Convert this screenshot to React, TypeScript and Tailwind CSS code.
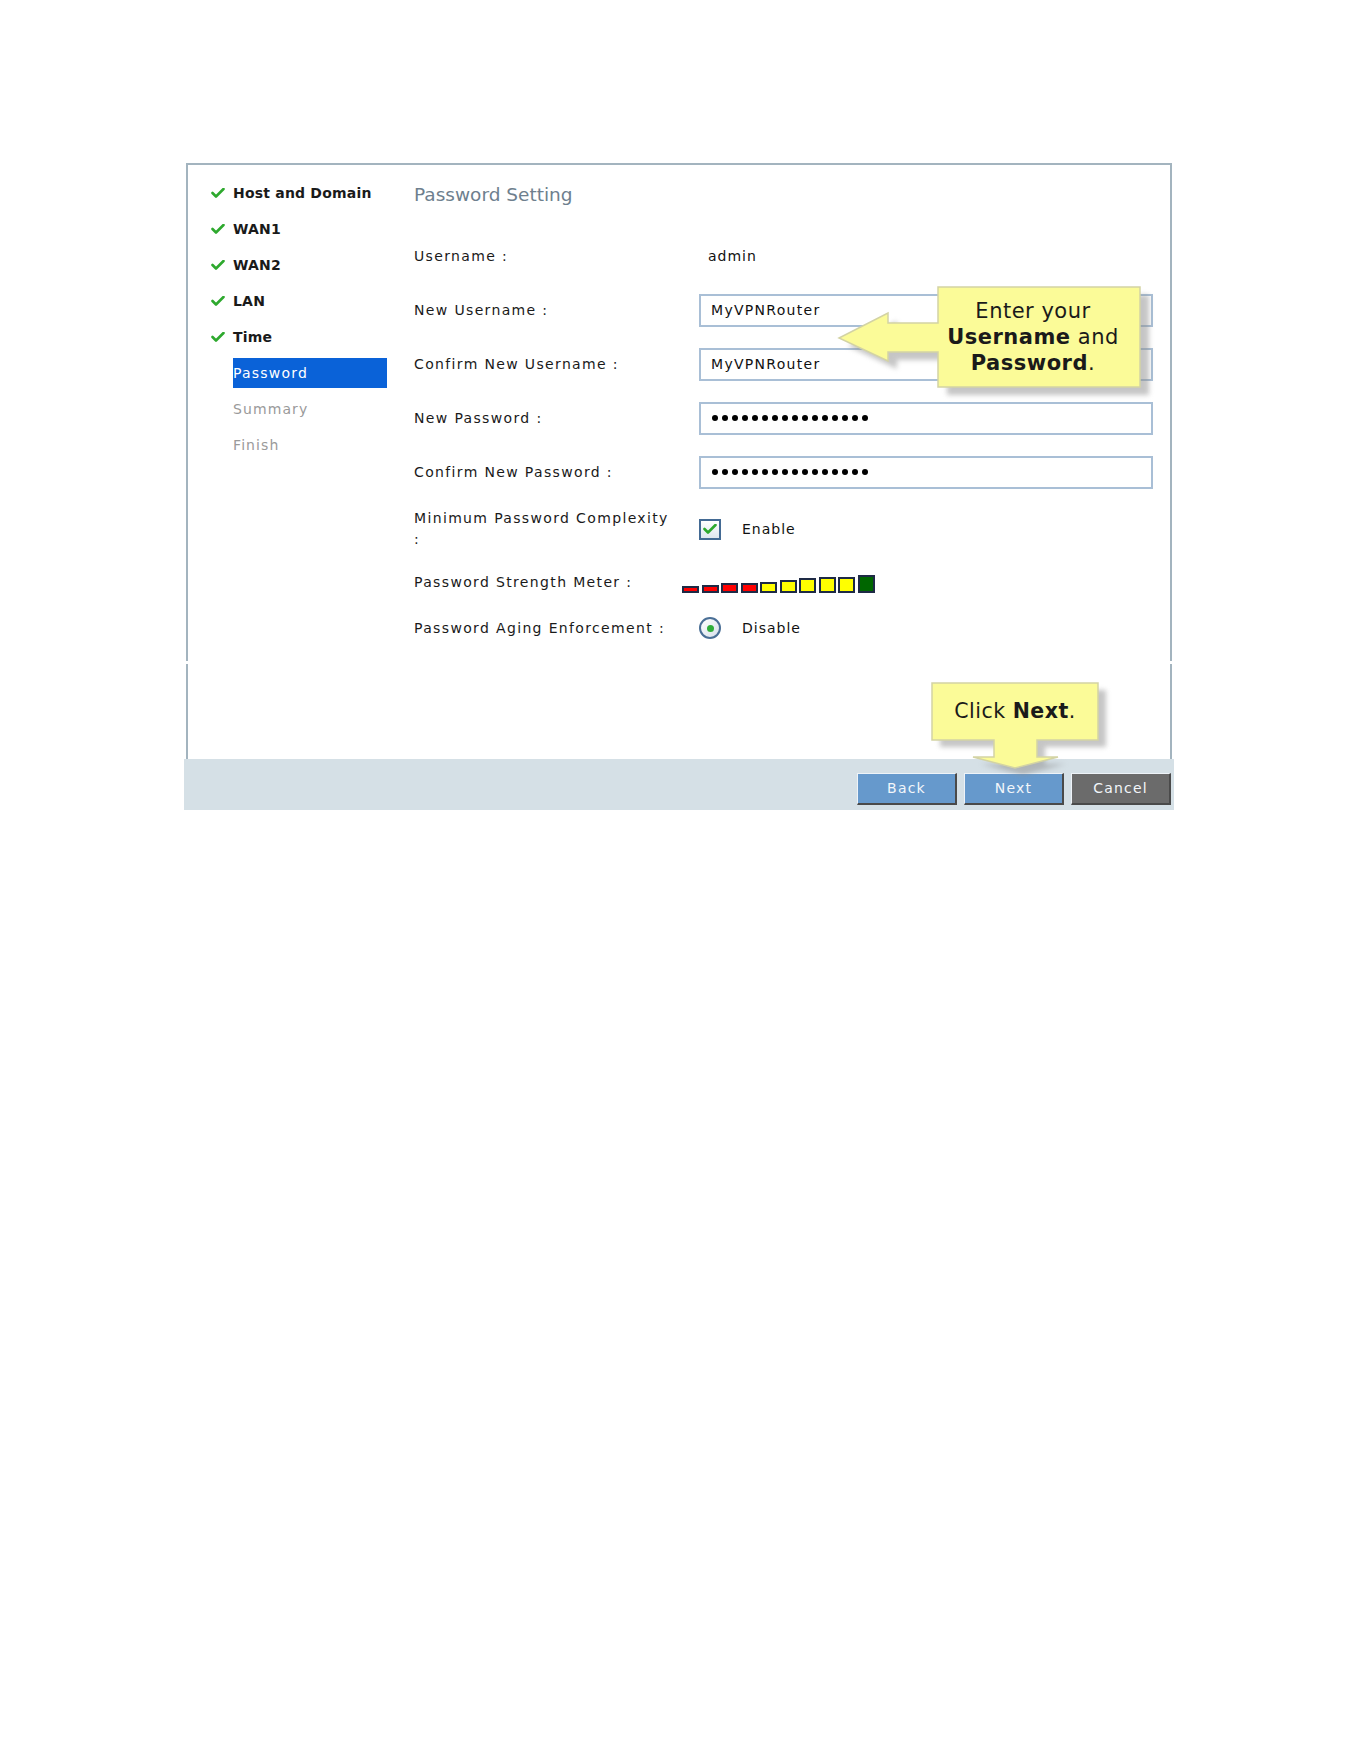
const font = { fontFamily: '"DejaVu Sans", Verdana, sans-serif' };

function Tick({ className = "" }: { className?: string }) {
  return (
    <svg width="14" height="10" viewBox="0 0 14 10" className={className}>
      <path d="M1.5 5 L5 8.5 L12.5 1" fill="none" stroke="#2ea92e" strokeWidth="2.6" strokeLinecap="round" strokeLinejoin="round" />
    </svg>
  );
}

const steps = [
  { name: "Host and Domain", state: "done" },
  { name: "WAN1", state: "done" },
  { name: "WAN2", state: "done" },
  { name: "LAN", state: "done" },
  { name: "Time", state: "done" },
  { name: "Password", state: "current" },
  { name: "Summary", state: "todo" },
  { name: "Finish", state: "todo" },
];

const meter = [
  { h: 7, c: "bg-[#ff0000]" },
  { h: 8, c: "bg-[#ff0000]" },
  { h: 10, c: "bg-[#ff0000]" },
  { h: 10, c: "bg-[#ff0000]" },
  { h: 11, c: "bg-[#ffff00]" },
  { h: 13, c: "bg-[#ffff00]" },
  { h: 15, c: "bg-[#ffff00]" },
  { h: 16, c: "bg-[#ffff00]" },
  { h: 16, c: "bg-[#ffff00]" },
  { h: 18, c: "bg-[#006600]" },
];

function TextBox({ value }: { value: string }) {
  return (
    <div className="w-[454px] h-[33px] border-2 border-[#a9bfd6] bg-white flex items-center pl-[10px] text-[14px] tracking-[1.3px] text-[#111]">
      {value}
    </div>
  );
}

function PasswordBox() {
  return (
    <div className="w-[454px] h-[33px] border-2 border-[#a9bfd6] bg-white flex items-center pl-[11px] gap-[4px]">
      {Array.from({ length: 16 }).map((_, i) => (
        <span key={i} className="w-[6px] h-[6px] rounded-full bg-black" />
      ))}
    </div>
  );
}

function Row({ label, children, h = "h-[54px]" }: { label: React.ReactNode; children?: React.ReactNode; h?: string }) {
  return (
    <div className={`flex items-center ${h}`}>
      <div className="w-[285px] text-[14px] leading-[21px] tracking-[1.35px] text-[#1a1a1a]">{label}</div>
      <div className="flex items-center">{children}</div>
    </div>
  );
}

export default function App() {
  return (
    <div className="min-h-[1761px] bg-white pt-[163px]" style={font}>
      <div className="relative ml-[184px] w-[990px]">
        {/* main panel */}
        <div className="mx-[2px] h-[498px] border-x-2 border-t-2 border-[#a3b4bf] flex">
          <div className="w-[226px] pt-[10px]">
            {steps.map((s) => (
              <div key={s.name} className="h-[36px] flex items-center">
                <div className="w-[45px] flex justify-end pr-[8px]">
                  {s.state === "done" && <Tick />}
                </div>
                {s.state === "current" ? (
                  <div className="w-[154px] h-[30px] bg-[#0a62d8] text-white text-[14px] tracking-[1.2px] flex items-center">
                    {s.name}
                  </div>
                ) : (
                  <div
                    className={
                      s.state === "done"
                        ? "text-[14px] font-bold text-[#1a1a1a] tracking-[0.2px]"
                        : "text-[14px] text-[#9a9a9a] tracking-[1.1px]"
                    }
                  >
                    {s.name}
                  </div>
                )}
              </div>
            ))}
          </div>

          <div className="flex-1 pt-[18px]">
            <div className="h-[24px] leading-[24px] text-[18.5px] text-[#6e7f8e]">Password Setting</div>
            <div className="mt-[22px]">
              <Row label="Username :">
                <span className="pl-[9px] text-[14px] tracking-[1px] text-[#111]">admin</span>
              </Row>
              <Row label="New Username :">
                <TextBox value="MyVPNRouter" />
              </Row>
              <Row label="Confirm New Username :">
                <TextBox value="MyVPNRouter" />
              </Row>
              <Row label="New Password :">
                <PasswordBox />
              </Row>
              <Row label="Confirm New Password :">
                <PasswordBox />
              </Row>
              <div className="mt-[9px]">
                <Row
                  h="h-[42px]"
                  label={
                    <>
                      Minimum Password Complexity
                      <br />:
                    </>
                  }
                >
                  <div className="w-[22px] h-[21px] border-2 border-[#436a94] bg-gradient-to-b from-[#ffffff] to-[#dfe7ef] flex items-center justify-center">
                    <Tick />
                  </div>
                  <span className="ml-[21px] text-[14px] tracking-[1px] text-[#111]">Enable</span>
                </Row>
              </div>
              <div className="mt-[15px]">
                <Row h="h-[34px]" label="Password Strength Meter :">
                  <div className="-ml-[17px] flex items-end gap-[2.5px] h-[18px] mt-[4px]">
                    {meter.map((m, i) => (
                      <div
                        key={i}
                        className={`w-[17px] border-2 border-[#1e2a45] ${m.c}`}
                        style={{ height: m.h }}
                      />
                    ))}
                  </div>
                </Row>
              </div>
              <div className="mt-[12px]">
                <Row h="h-[34px]" label="Password Aging Enforcement :">
                  <div className="w-[22px] h-[22px] rounded-full border-2 border-[#4a6f96] bg-gradient-to-br from-[#ffffff] to-[#d6e0ea] flex items-center justify-center">
                    <span className="w-[7px] h-[7px] rounded-full bg-[#2fae3a]" />
                  </div>
                  <span className="ml-[21px] text-[14px] tracking-[1px] text-[#111]">Disable</span>
                </Row>
              </div>
            </div>
          </div>
        </div>

        {/* lower panel */}
        <div className="mx-[2px] mt-[3px] h-[95px] border-x-2 border-[#a3b4bf]" />

        {/* footer */}
        <div className="h-[51px] bg-[#d5e0e6] flex justify-end items-start pt-[14px] pr-[3px] gap-[7px]">
          {[
            { t: "Back", c: "bg-[#6699cc]" },
            { t: "Next", c: "bg-[#6699cc]" },
            { t: "Cancel", c: "bg-[#6b6b6b]" },
          ].map((b) => (
            <button
              key={b.t}
              className={`w-[100px] h-[32px] ${b.c} border-t border-l border-t-[#eef3f8] border-l-[#eef3f8] border-b-2 border-r-2 border-b-[#4a4a4a] border-r-[#4a4a4a] text-[14px] tracking-[1.2px] text-[#f2f6fa]`}
            >
              {b.t}
            </button>
          ))}
        </div>

        {/* callout: username/password */}
        <svg className="absolute left-[651px] top-[120px]" width="330" height="120" viewBox="0 0 330 120">
          <defs>
            <filter id="sh1" x="-10%" y="-10%" width="130%" height="130%">
              <feGaussianBlur stdDeviation="2.5" />
            </filter>
          </defs>
          <path
            d="M103,4 H305 V104 H103 V69 H53 V78 L4,55 L53,30 V40 H103 Z"
            transform="translate(9,8)"
            fill="#8c8c8c"
            opacity="0.5"
            filter="url(#sh1)"
          />
          <path d="M103,4 H305 V104 H103 V69 H53 V78 L4,55 L53,30 V40 H103 Z" fill="#fbfb98" stroke="#d3d3a4" strokeWidth="1.5" />
        </svg>
        <div className="absolute left-[748px] top-[124px] w-[202px] h-[100px] flex flex-col items-center justify-center text-[21px] leading-[26px] text-[#1a1a1a] tracking-[0.5px]">
          <div>Enter your</div>
          <div>
            <b>Username</b> and
          </div>
          <div>
            <b>Password</b>.
          </div>
        </div>

        {/* callout: next */}
        <svg className="absolute left-[741px] top-[516px]" width="190" height="100" viewBox="0 0 190 100">
          <defs>
            <filter id="sh2" x="-10%" y="-10%" width="130%" height="130%">
              <feGaussianBlur stdDeviation="2.5" />
            </filter>
          </defs>
          <path
            d="M7,4 H173 V61 H112 V78 H133 L90,89 L48,78 H69 V61 H7 Z"
            transform="translate(8,7)"
            fill="#8c8c8c"
            opacity="0.5"
            filter="url(#sh2)"
          />
          <path d="M7,4 H173 V61 H112 V78 H133 L90,89 L48,78 H69 V61 H7 Z" fill="#fbfb98" stroke="#d3d3a4" strokeWidth="1.5" />
        </svg>
        <div className="absolute left-[748px] top-[520px] w-[166px] h-[57px] flex items-center justify-center text-[20.5px] text-[#1a1a1a] tracking-[0.5px]">
          <span>
            Click <b>Next</b>.
          </span>
        </div>
      </div>
    </div>
  );
}
